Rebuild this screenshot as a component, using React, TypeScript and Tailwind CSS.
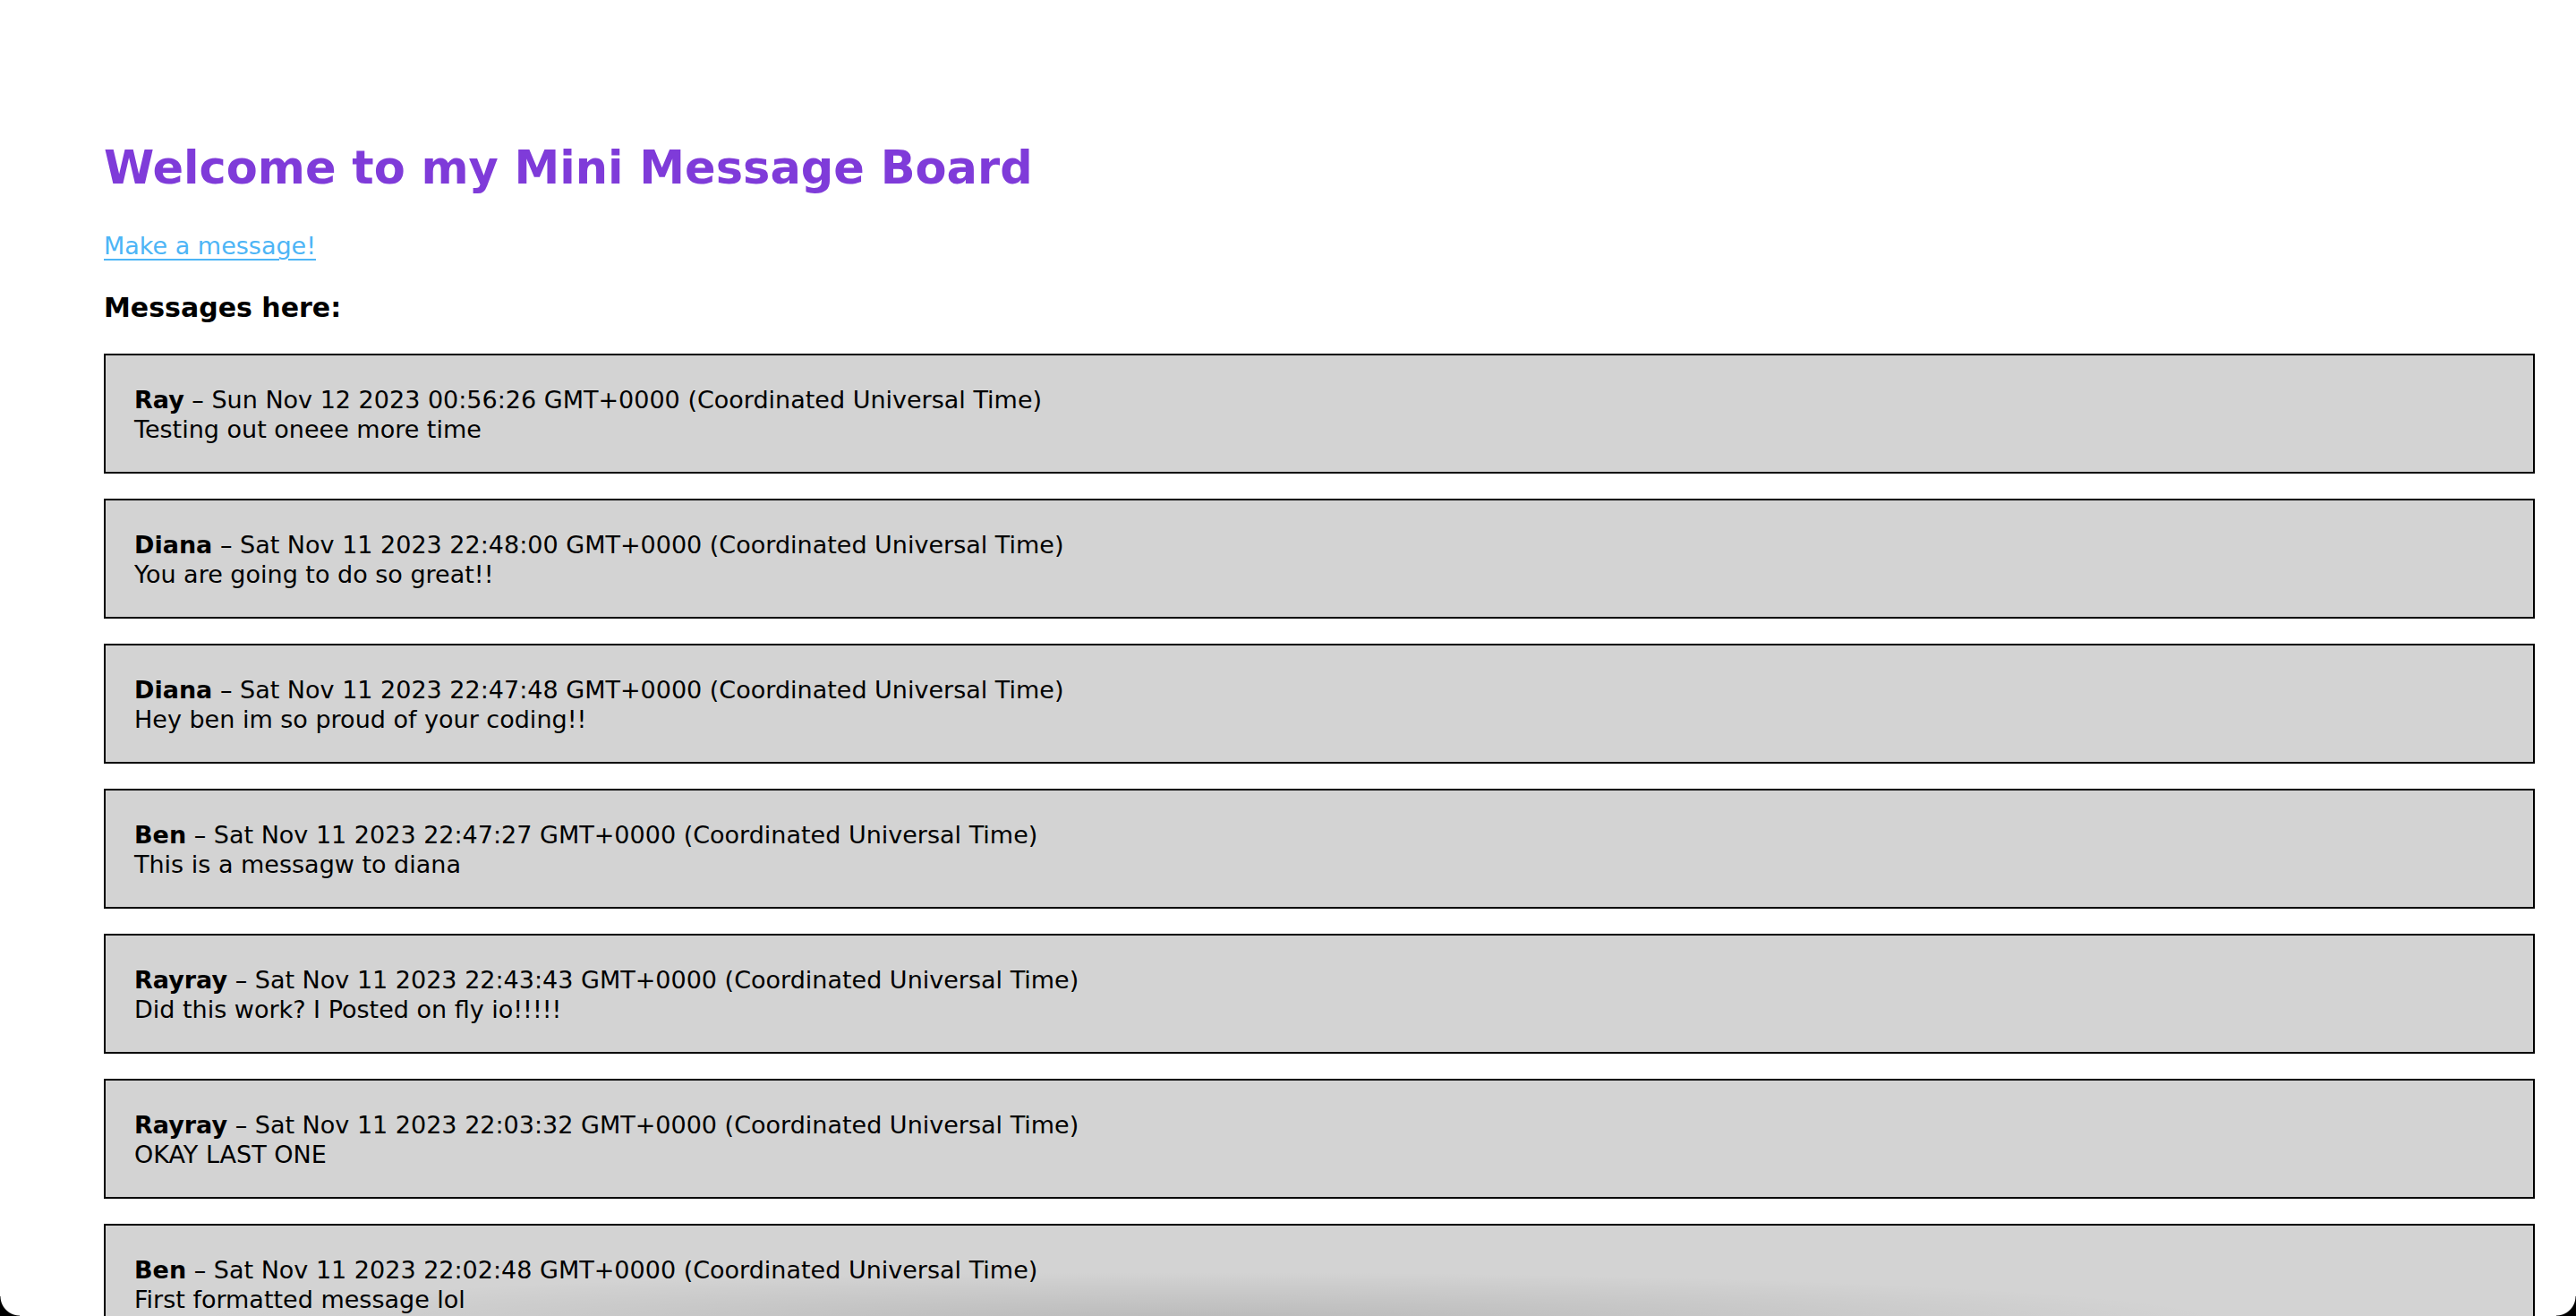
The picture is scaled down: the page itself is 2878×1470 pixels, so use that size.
import React from "react";

type Message = { user: string; added: string; text: string };

const messages: Message[] = [
  { user: "Ray", added: "Sun Nov 12 2023 00:56:26 GMT+0000 (Coordinated Universal Time)", text: "Testing out oneee more time" },
  { user: "Diana", added: "Sat Nov 11 2023 22:48:00 GMT+0000 (Coordinated Universal Time)", text: "You are going to do so great!!" },
  { user: "Diana", added: "Sat Nov 11 2023 22:47:48 GMT+0000 (Coordinated Universal Time)", text: "Hey ben im so proud of your coding!!" },
  { user: "Ben", added: "Sat Nov 11 2023 22:47:27 GMT+0000 (Coordinated Universal Time)", text: "This is a messagw to diana" },
  { user: "Rayray", added: "Sat Nov 11 2023 22:43:43 GMT+0000 (Coordinated Universal Time)", text: "Did this work? I Posted on fly io!!!!!" },
  { user: "Rayray", added: "Sat Nov 11 2023 22:03:32 GMT+0000 (Coordinated Universal Time)", text: "OKAY LAST ONE" },
  { user: "Ben", added: "Sat Nov 11 2023 22:02:48 GMT+0000 (Coordinated Universal Time)", text: "First formatted message lol" },
];

export default function App() {
  return (
    <div className="relative h-[1470px] overflow-hidden bg-white font-['DejaVu_Sans',sans-serif] text-black">
      <main className="pl-[116px] pr-[46px] pt-[162px]">
        <h1 className="text-[51px] font-bold leading-none text-[#7f3bd9]">
          Welcome to my Mini Message Board
        </h1>
        <div className="mt-[48px] text-[27px] leading-none">
          <a href="#" className="text-[#4db5f6] underline decoration-2 underline-offset-[5px]">
            Make a message!
          </a>
        </div>
        <h2 className="mt-[41px] text-[30px] font-bold leading-none">Messages here:</h2>

        <div className="mt-[36px] flex flex-col gap-[28px]">
          {messages.map((m, i) => (
            <div
              key={i}
              className="border-2 border-black bg-[#d3d3d3] pb-[31px] pl-[32px] pt-[33px] text-[27px] leading-[33px]"
            >
              <p>
                <b>{m.user}</b> – {m.added}
              </p>
              <p>{m.text}</p>
            </div>
          ))}
        </div>
      </main>

      <div className="pointer-events-none absolute bottom-[-60px] left-[200px] h-[110px] w-[2300px] rounded-[50%] bg-[radial-gradient(ellipse_at_center,rgba(0,0,0,0.12),rgba(0,0,0,0)_70%)]" />
      <div className="pointer-events-none absolute bottom-0 left-0 h-[22px] w-[22px] bg-[radial-gradient(circle_at_100%_0%,transparent_21px,#000_22px)]" />
      <div className="pointer-events-none absolute bottom-0 right-0 h-[22px] w-[22px] bg-[radial-gradient(circle_at_0%_0%,transparent_21px,#000_22px)]" />
    </div>
  );
}
